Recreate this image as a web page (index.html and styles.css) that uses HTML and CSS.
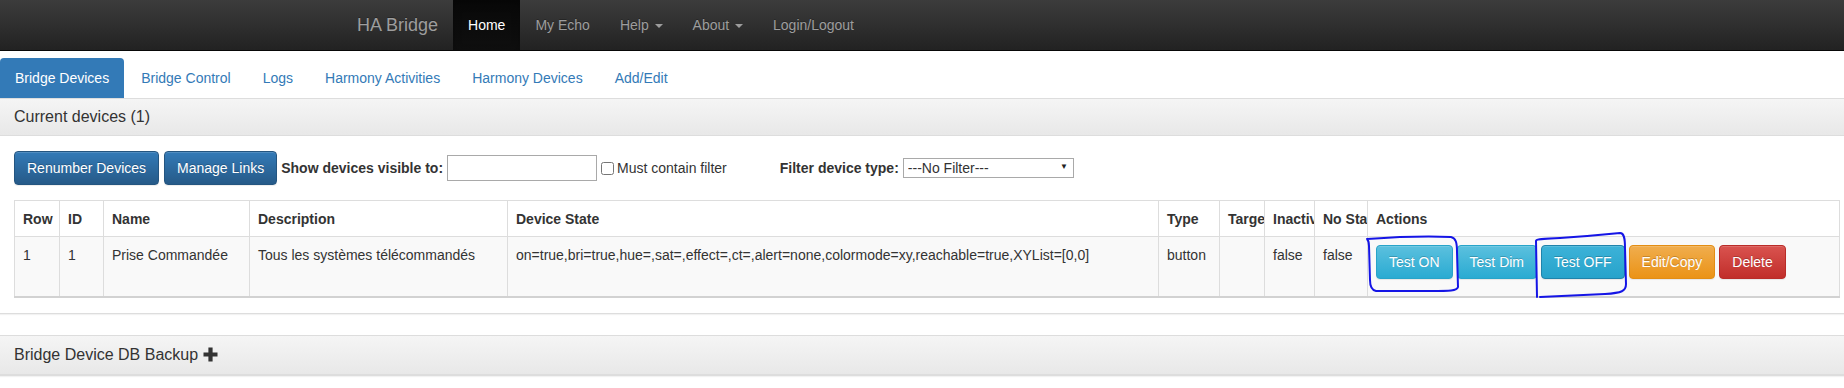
FILE: index.html
```html
<!DOCTYPE html>
<html lang="fr">
<head>
  <meta charset="UTF-8">
  <meta name="viewport" content="width=device-width, initial-scale=1.0">
  <title>HA Bridge</title>
  <link rel="stylesheet" href="styles.css">
</head>
<body>

  <nav class="navbar">
    <div class="navbar-inner">
      <a class="brand" href="#">HA Bridge</a>
      <ul class="nav-links">
        <li class="active"><a href="#">Home</a></li>
        <li><a href="#">My Echo</a></li>
        <li><a href="#">Help <span class="caret"></span></a></li>
        <li><a href="#">About <span class="caret"></span></a></li>
        <li><a href="#">Login/Logout</a></li>
      </ul>
    </div>
  </nav>

  <ul class="nav-tabs">
    <li class="active"><a href="#">Bridge Devices</a></li>
    <li><a href="#">Bridge Control</a></li>
    <li><a href="#">Logs</a></li>
    <li><a href="#">Harmony Activities</a></li>
    <li><a href="#">Harmony Devices</a></li>
    <li><a href="#">Add/Edit</a></li>
  </ul>

  <div class="panel devices-panel">
    <div class="panel-heading">
      <h2 class="panel-title">Current devices (1)</h2>
    </div>
    <div class="panel-body">
      <div class="toolbar">
        <button class="btn btn-primary">Renumber Devices</button>
        <button class="btn btn-primary">Manage Links</button>
        <label class="filter-label" for="visibleTo">Show devices visible to:</label>
        <input type="text" id="visibleTo" class="filter-input">
        <label class="check-label"><input type="checkbox" class="check-box"> Must contain filter</label>
        <label class="filter-label type-label" for="deviceType">Filter device type:</label>
        <span class="select-wrap">
          <select id="deviceType" class="type-select">
            <option>---No Filter---</option>
          </select>
        </span>
      </div>

      <table class="devices">
        <colgroup>
          <col style="width: 45px">
          <col style="width: 44px">
          <col style="width: 146px">
          <col style="width: 258px">
          <col style="width: 651px">
          <col style="width: 61px">
          <col style="width: 45px">
          <col style="width: 50px">
          <col style="width: 53px">
          <col style="width: 472px">
        </colgroup>
        <thead>
          <tr>
            <th>Row</th>
            <th>ID</th>
            <th>Name</th>
            <th>Description</th>
            <th>Device State</th>
            <th>Type</th>
            <th>Targets</th>
            <th>Inactive</th>
            <th>No State</th>
            <th>Actions</th>
          </tr>
        </thead>
        <tbody>
          <tr>
            <td>1</td>
            <td>1</td>
            <td>Prise Commandée</td>
            <td>Tous les systèmes télécommandés</td>
            <td>on=true,bri=true,hue=,sat=,effect=,ct=,alert=none,colormode=xy,reachable=true,XYList=[0,0]</td>
            <td>button</td>
            <td></td>
            <td>false</td>
            <td>false</td>
            <td class="actions">
              <div class="action-buttons">
                <button class="btn btn-info">Test ON</button>
                <button class="btn btn-info">Test Dim</button>
                <button class="btn btn-info btn-focus">Test OFF</button>
                <button class="btn btn-warning">Edit/Copy</button>
                <button class="btn btn-danger">Delete</button>
              </div>
            </td>
          </tr>
        </tbody>
      </table>
    </div>
  </div>

  <div class="panel backup-panel">
    <div class="panel-heading">
      <h2 class="panel-title">Bridge Device DB Backup
        <svg class="plus-icon" width="15" height="15" viewBox="0 0 15 15"><path d="M5.4 0.5h4.2v4.9h4.9v4.2h-4.9v4.9h-4.2v-4.9h-4.9v-4.2h4.9z" fill="#333"/></svg>
      </h2>
    </div>
  </div>

  <!-- hand drawn marks over the test buttons -->
  <svg class="marks" width="1844" height="388" viewBox="0 0 1844 388">
    <path d="M1367,239 C1395,237 1430,236 1451,237 C1456,238 1457,243 1457,252 L1458,287 C1457,291 1450,291 1430,291 L1376,291 C1371,290 1370,286 1370,280 L1369,246 C1369,242 1368,240 1367,239" />
    <path d="M1537,297 L1536,241 C1536,239 1540,239 1560,238 C1590,236 1610,234 1620,233 C1624,233 1625,238 1625,248 L1626,284 C1626,291 1622,293 1605,294 L1540,297" />
  </svg>

</body>
</html>
```

FILE: styles.css
```css
* {
  box-sizing: border-box;
}

body {
  margin: 0;
  font-family: "Liberation Sans", Arial, sans-serif;
  font-size: 14px;
  line-height: 20px;
  color: #333;
  background: #fff;
  position: relative;
  overflow: hidden;
}

a {
  text-decoration: none;
}

/* top navbar */
.navbar {
  height: 51px;
  background-image: linear-gradient(to bottom, #3c3c3c 0, #222 100%);
  border-bottom: 1px solid #080808;
}

.navbar-inner {
  width: 1160px;
  margin: 0 auto;
  display: flex;
}

.brand {
  display: block;
  height: 50px;
  padding: 15px;
  font-size: 18px;
  line-height: 20px;
  color: #9d9d9d;
  text-shadow: 0 -1px 0 rgba(0, 0, 0, 0.25);
}

.nav-links {
  display: flex;
  list-style: none;
  margin: 0;
  padding: 0;
}

.nav-links a {
  display: block;
  height: 50px;
  padding: 15px;
  line-height: 20px;
  color: #9d9d9d;
  text-shadow: 0 -1px 0 rgba(0, 0, 0, 0.25);
}

.nav-links .active a {
  color: #fff;
  background-image: linear-gradient(to bottom, #080808 0, #0f0f0f 100%);
  box-shadow: inset 0 3px 9px rgba(0, 0, 0, 0.25);
}

.caret {
  display: inline-block;
  width: 0;
  height: 0;
  margin-left: 2px;
  vertical-align: middle;
  border-top: 4px solid;
  border-left: 4px solid transparent;
  border-right: 4px solid transparent;
}

/* tabs */
.nav-tabs {
  display: flex;
  list-style: none;
  margin: 7px 0 0;
  padding: 0;
  border-bottom: 1px solid #ddd;
}

.nav-tabs li {
  margin-right: 2px;
}

.nav-tabs a {
  display: block;
  padding: 10px 15px;
  line-height: 20px;
  color: #337ab7;
  border-radius: 4px 4px 0 0;
}

.nav-tabs .active a {
  color: #fff;
  background-color: #337ab7;
}

/* panels */
.panel {
  border-bottom: 1px solid #ddd;
  box-shadow: 0 1px 1px rgba(0, 0, 0, 0.05);
  margin-bottom: 21px;
}

.panel-heading {
  padding: 10px 14px;
  background-image: linear-gradient(to bottom, #f5f5f5 0, #e8e8e8 100%);
  border-bottom: 1px solid #ddd;
}

.panel-title {
  margin: 0;
  font-size: 16px;
  font-weight: normal;
  line-height: 16px;
  color: #333;
}

.backup-panel {
  border-top: 1px solid #ddd;
}

.backup-panel .panel-title {
  line-height: 18px;
}

.plus-icon {
  vertical-align: -2px;
}

.panel-body {
  padding: 15px 5px 15px 14px;
}

/* toolbar */
.toolbar {
  display: flex;
  align-items: center;
  height: 34px;
}

.btn {
  display: inline-block;
  padding: 6px 12px;
  font-family: inherit;
  font-size: 14px;
  line-height: 20px;
  color: #fff;
  border: 1px solid transparent;
  border-radius: 4px;
  text-shadow: 0 -1px 0 rgba(0, 0, 0, 0.2);
  box-shadow: inset 0 1px 0 rgba(255, 255, 255, 0.15), 0 1px 1px rgba(0, 0, 0, 0.075);
  white-space: nowrap;
  cursor: pointer;
}

.btn-primary {
  background-image: linear-gradient(to bottom, #337ab7 0, #265a88 100%);
  border-color: #245580;
}

.btn-info {
  background-image: linear-gradient(to bottom, #5bc0de 0, #2aabd2 100%);
  border-color: #28a4c9;
}

.btn-focus {
  background-image: linear-gradient(to bottom, #3cb2d8 0, #27a3cb 100%);
  border-color: #2083ab;
}

.btn-warning {
  background-image: linear-gradient(to bottom, #f0ad4e 0, #eb9316 100%);
  border-color: #e38d13;
}

.btn-danger {
  background-image: linear-gradient(to bottom, #d9534f 0, #c12e2a 100%);
  border-color: #b92c28;
}

.toolbar .btn + .btn {
  margin-left: 5px;
}

.filter-label {
  font-weight: bold;
  margin: 0 4px 0 4px;
}

.filter-input {
  width: 150px;
  height: 26px;
  margin: 0;
  border: 1px solid #a9a9a9;
  font: inherit;
}

.check-label {
  display: flex;
  align-items: center;
  margin-left: 4px;
}

.check-box {
  width: 13px;
  height: 13px;
  margin: 0 3px 0 0;
}

.type-label {
  margin-left: 53px;
}

.select-wrap {
  position: relative;
  display: inline-block;
}

.type-select {
  -webkit-appearance: none;
  appearance: none;
  display: block;
  width: 171px;
  height: 20px;
  padding: 0 4px;
  font: inherit;
  line-height: 18px;
  color: #333;
  background: #fff;
  border: 1px solid #a9a9a9;
  border-radius: 0;
}

.select-wrap::after {
  content: "▼";
  position: absolute;
  right: 6px;
  top: 4px;
  font-size: 8px;
  line-height: 10px;
  color: #222;
  pointer-events: none;
}

/* devices table */
.devices {
  width: 1825px;
  margin-top: 15px;
  table-layout: fixed;
  border-collapse: collapse;
  border: 1px solid #ddd;
  border-bottom: 2px solid #d2d2d2;
}

.devices th,
.devices td {
  border: 1px solid #ddd;
  text-align: left;
  vertical-align: top;
  white-space: nowrap;
  overflow: hidden;
}

.devices th {
  padding: 8px 8px 7px;
  font-weight: bold;
  background: #fff;
}

.devices td {
  padding: 8px;
  background: #f9f9f9;
}

.devices td.actions {
  padding-bottom: 17px;
}

.action-buttons {
  display: flex;
  gap: 4px;
}

/* hand drawn marks */
.marks {
  position: absolute;
  left: 0;
  top: 0;
  pointer-events: none;
}

.marks path {
  fill: none;
  stroke: #1515e6;
  stroke-width: 2;
  stroke-linejoin: round;
  stroke-linecap: round;
}
```
